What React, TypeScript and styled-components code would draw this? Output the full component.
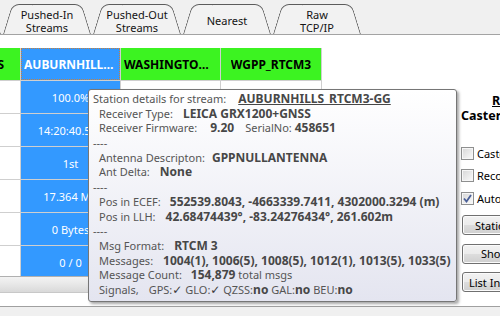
import React from "react";
import styled, { createGlobalStyle } from "styled-components";

const GlobalStyle = createGlobalStyle`
  * { box-sizing: border-box; }
  html, body { margin: 0; padding: 0; background: #f0f0f0; overflow: hidden; }
  body { font-family: "Noto Sans", "DejaVu Sans", sans-serif; font-size: 11px; color: #000; }
`;

const Window = styled.div`
  position: relative;
  width: 500px;
  height: 316px;
  overflow: hidden;
  background: #f0f0f0;
`;

const TabStrip = styled.div`
  height: 35px;
  border-bottom: 1px solid #a3a3a3;
  display: flex;
  align-items: flex-end;
`;

const TabRow = styled.div`
  display: flex;
  align-items: flex-end;
  gap: 2px;
  margin-left: -87px;
`;

const Tab = styled.div`
  position: relative;
  isolation: isolate;
  flex: 0 0 88px;
  height: 30px;
  padding-top: 3px;
  display: flex;
  flex-direction: column;
  align-items: center;
  justify-content: center;
  font-size: 11px;
  line-height: 13px;
  color: #141414;
  text-align: center;
  white-space: nowrap;

  &::before,
  &::after {
    content: "";
    position: absolute;
    top: 0;
    bottom: 0;
    width: 56%;
    background: #f2f2f2;
    border: 1px solid #5c5c5c;
    border-bottom: none;
    z-index: -1;
  }
  &::before {
    left: 0;
    border-right: none;
    border-top-left-radius: 7px;
    transform-origin: bottom left;
    transform: skewX(-17deg);
  }
  &::after {
    right: 0;
    border-left: none;
    border-top-right-radius: 7px;
    transform-origin: bottom right;
    transform: skewX(17deg);
  }
`;

const TabPage = styled.div`
  display: flex;
  height: 272px;
  background: #ffffff;
  border-bottom: 1px solid #a0a0a0;
`;

const GridPane = styled.div`
  flex: 0 0 456px;
  display: flex;
  flex-direction: column;
  padding-top: 13px;
`;

const GridViewport = styled.div`
  height: 228px;
  overflow: hidden;
`;

const Grid = styled.div`
  display: grid;
  width: 322px;
  grid-template-columns: 20px 99px 99px 100px;
  grid-auto-rows: 32px;
  gap: 1px;
  padding-right: 1px;
  background: #cfcfcf;
`;

const HeadCell = styled.div<{ $sel?: boolean; $clipLeft?: boolean }>`
  display: flex;
  align-items: center;
  justify-content: ${(p) => (p.$clipLeft ? "flex-end" : "center")};
  padding: 0 ${(p) => (p.$clipLeft ? "16px" : "3px")} 0 3px;
  overflow: hidden;
  background: ${(p) => (p.$sel ? "#3399ff" : "#3cf321")};
  color: ${(p) => (p.$sel ? "#ffffff" : "#000000")};
  font-weight: 700;
  font-size: 12px;
  white-space: nowrap;
  outline: ${(p) => (p.$sel ? "1px dotted #c9803a" : "none")};
  outline-offset: -1px;
`;

const HeadText = styled.span`
  overflow: hidden;
  text-overflow: ellipsis;
`;

const Cell = styled.div<{ $sel?: boolean }>`
  display: flex;
  align-items: center;
  justify-content: center;
  overflow: hidden;
  white-space: nowrap;
  background: ${(p) => (p.$sel ? "#3399ff" : "#ffffff")};
  color: ${(p) => (p.$sel ? "#ffffff" : "#000000")};
  font-size: 11px;
`;

const HScroll = styled.div`
  height: 17px;
  border-top: 1px solid #b0b0b0;
  border-bottom: 1px solid #c8c8c8;
  background: linear-gradient(#f3f3f3, #e7e7e7 50%, #d9d9d9);
`;

const SidePanel = styled.div`
  flex: 0 0 200px;
  display: flex;
  flex-direction: column;
  align-items: flex-start;
  padding: 58px 0 0 5px;
`;

const PanelTitle = styled.div<{ $indent?: number; $underline?: boolean }>`
  font-weight: 700;
  font-size: 12.5px;
  line-height: 15px;
  padding-left: ${(p) => p.$indent ?? 0}px;
  text-decoration: ${(p) => (p.$underline ? "underline" : "none")};
  white-space: nowrap;
  color: #000;
`;

const CheckList = styled.div`
  margin-top: 19px;
  display: flex;
  flex-direction: column;
`;

const CheckRow = styled.label`
  display: flex;
  align-items: center;
  gap: 3px;
  height: 22.5px;
  white-space: nowrap;
  font-size: 11px;
  color: #000;
`;

const CheckBox = styled.span`
  width: 13px;
  height: 13px;
  flex: 0 0 13px;
  border: 1px solid #8e8f8f;
  background: linear-gradient(135deg, #d6d6d6, #fbfbfb);
  box-shadow: inset 0 0 0 1px #f6f6f6;
  display: flex;
  align-items: center;
  justify-content: center;
`;

const ButtonStack = styled.div`
  margin-top: 5.5px;
  display: flex;
  flex-direction: column;
  gap: 8.5px;
  padding-left: 1px;
`;

const PanelButton = styled.button<{ $inset: number }>`
  width: 100px;
  height: 20px;
  padding: 0 0 0 ${(p) => p.$inset}px;
  border: 1px solid #707070;
  border-radius: 3px;
  background: linear-gradient(#f2f2f2 0%, #ebebeb 49%, #dddddd 50%, #cfcfcf 100%);
  box-shadow: inset 0 0 0 1px #fbfbfb;
  font-family: "Noto Sans", sans-serif;
  font-size: 11px;
  color: #000;
  text-align: left;
  white-space: nowrap;
  overflow: hidden;
`;

const Tooltip = styled.div`
  position: absolute;
  left: 88px;
  top: 89px;
  width: 369px;
  padding: 2px 4px 3px 4px;
  border: 1px solid #767676;
  border-radius: 3px;
  background: linear-gradient(#ffffff, #e4e5f0);
  box-shadow: 2px 2px 3px rgba(0, 0, 0, 0.35);
  color: #555555;
  font-size: 11px;
  line-height: 14.7px;
  white-space: nowrap;
`;

const TipLine = styled.div<{ $indent?: boolean }>`
  height: 14.7px;
  padding-left: ${(p) => (p.$indent ? 6 : 0)}px;
`;

const Strong = styled.span<{ $gap?: number; $link?: boolean }>`
  font-weight: 700;
  font-size: 12px;
  color: #474747;
  margin-left: ${(p) => p.$gap ?? 0}px;
  text-decoration: ${(p) => (p.$link ? "underline" : "none")};
`;

const Txt = styled.span<{ $gap?: number }>`
  margin-left: ${(p) => p.$gap ?? 0}px;
`;

const Tick = styled.span`
  font-family: "DejaVu Sans", sans-serif;
  font-size: 12px;
  font-weight: 700;
  color: #3a3a3a;
`;

const CheckMark = () => (
  <svg width="9" height="9" viewBox="0 0 9 9">
    <path d="M1 4.5 L3.5 7.5 L8 1" fill="none" stroke="#4a5f97" strokeWidth="1.8" />
  </svg>
);

const blueCells = ["100.0%", "14:20:40.537", "1st", "17.364 MB", "0 Bytes", "0 / 0"];

export default function App() {
  return (
    <Window>
      <GlobalStyle />
      <TabStrip>
        <TabRow>
          <Tab>Streams</Tab>
          <Tab>
            <span>Pushed-In</span>
            <span>Streams</span>
          </Tab>
          <Tab>
            <span>Pushed-Out</span>
            <span>Streams</span>
          </Tab>
          <Tab>Nearest</Tab>
          <Tab>
            <span>Raw</span>
            <span>TCP/IP</span>
          </Tab>
        </TabRow>
      </TabStrip>

      <TabPage>
        <GridPane>
          <GridViewport>
            <Grid>
              <HeadCell $clipLeft>RTCM3_GPS</HeadCell>
              <HeadCell $sel>
                <HeadText>AUBURNHILLS_RTCM3-GG</HeadText>
              </HeadCell>
              <HeadCell>
                <HeadText>WASHINGTON_RTCM3</HeadText>
              </HeadCell>
              <HeadCell>
                <HeadText>WGPP_RTCM3</HeadText>
              </HeadCell>
              {blueCells.map((v) => (
                <React.Fragment key={v}>
                  <Cell />
                  <Cell $sel>{v}</Cell>
                  <Cell />
                  <Cell />
                </React.Fragment>
              ))}
            </Grid>
          </GridViewport>
          <HScroll />
        </GridPane>

        <SidePanel>
          <PanelTitle $indent={31} $underline>
            Remote Caster
          </PanelTitle>
          <PanelTitle>Caster Status Info</PanelTitle>
          <CheckList>
            <CheckRow>
              <CheckBox />
              Caster Logging
            </CheckRow>
            <CheckRow>
              <CheckBox />
              Record Streams
            </CheckRow>
            <CheckRow>
              <CheckBox>
                <CheckMark />
              </CheckBox>
              Auto Refresh
            </CheckRow>
          </CheckList>
          <ButtonStack>
            <PanelButton $inset={12}>Station Details</PanelButton>
            <PanelButton $inset={18}>Show Graph</PanelButton>
            <PanelButton $inset={6}>List Information</PanelButton>
          </ButtonStack>
        </SidePanel>
      </TabPage>

      <Tooltip>
        <TipLine>
          Station details for stream:<Strong $gap={12} $link>AUBURNHILLS_RTCM3-GG</Strong>
        </TipLine>
        <TipLine $indent>
          Receiver Type:<Strong $gap={10}>LEICA GRX1200+GNSS</Strong>
        </TipLine>
        <TipLine $indent>
          Receiver Firmware:<Strong $gap={13}>9.20</Strong>
          <Txt $gap={11}>SerialNo: </Txt>
          <Strong>458651</Strong>
        </TipLine>
        <TipLine>----</TipLine>
        <TipLine $indent>
          Antenna Descripton:<Strong $gap={7}>GPPNULLANTENNA</Strong>
        </TipLine>
        <TipLine $indent>
          Ant Delta:<Strong $gap={10}>None</Strong>
        </TipLine>
        <TipLine>----</TipLine>
        <TipLine $indent>
          Pos in ECEF:<Strong $gap={9}>552539.8043, -4663339.7411, 4302000.3294 (m)</Strong>
        </TipLine>
        <TipLine $indent>
          Pos in LLH:<Strong $gap={10}>42.68474439°, -83.24276434°, 261.602m</Strong>
        </TipLine>
        <TipLine>----</TipLine>
        <TipLine $indent>
          Msg Format:<Strong $gap={10}>RTCM 3</Strong>
        </TipLine>
        <TipLine $indent>
          Messages:<Strong $gap={10}>1004(1), 1006(5), 1008(5), 1012(1), 1013(5), 1033(5)</Strong>
        </TipLine>
        <TipLine $indent>
          Message Count:<Strong $gap={9}>154,879</Strong> total msgs
        </TipLine>
        <TipLine $indent>
          Signals,<Txt $gap={10}>GPS:</Txt>
          <Tick>✓</Tick> GLO:<Tick>✓</Tick> QZSS:<Strong>no</Strong> GAL:<Strong>no</Strong> BEU:
          <Strong>no</Strong>
        </TipLine>
      </Tooltip>
    </Window>
  );
}
